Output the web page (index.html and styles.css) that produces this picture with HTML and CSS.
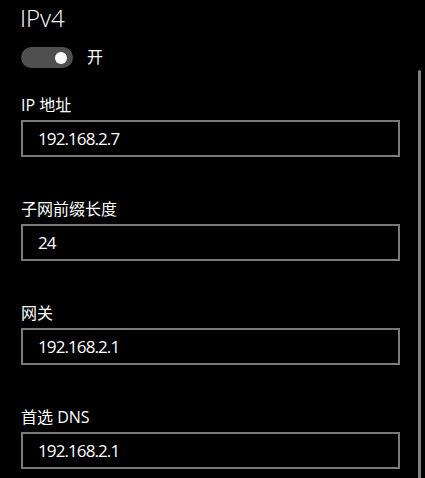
FILE: index.html
```html
<!DOCTYPE html>
<html lang="zh-CN">
<head>
<meta charset="utf-8">
<link rel="stylesheet" href="styles.css">
</head>
<body>
<div class="page">
  <main class="content">
    <h1 class="title">IPv4</h1>
    <div class="toggle-row">
      <span class="toggle"><span class="knob"></span></span>
      <span class="toggle-label">开</span>
    </div>
    <div class="field">
      <div class="label">IP 地址</div>
      <div class="textbox">192.168.2.7</div>
    </div>
    <div class="field">
      <div class="label">子网前缀长度</div>
      <div class="textbox">24</div>
    </div>
    <div class="field">
      <div class="label">网关</div>
      <div class="textbox">192.168.2.1</div>
    </div>
    <div class="field">
      <div class="label">首选 DNS</div>
      <div class="textbox">192.168.2.1</div>
    </div>
  </main>
  <div class="scrollbar"></div>
</div>
</body>
</html>
```
FILE: styles.css
```css
html, body {
  margin: 0;
  padding: 0;
  background: #000;
  color: #fff;
  font-family: "Open Sans", "Noto Sans CJK SC", sans-serif;
  overflow: hidden;
}
.page {
  display: flex;
  height: 478px;
}
.content {
  width: 379px;
  padding: 2px 0 0 21px;
}
.title {
  margin: 0 0 0 -1px;
  font-size: 24px;
  line-height: 32px;
  font-weight: 300;
}
.toggle-row {
  display: flex;
  align-items: center;
  gap: 14px;
  margin-top: 13px;
  height: 21px;
}
.toggle {
  width: 52px;
  height: 21px;
  border-radius: 11px;
  background: #4f4f4f;
  display: flex;
  align-items: center;
  justify-content: flex-end;
  padding-right: 6px;
  box-sizing: border-box;
}
.knob {
  width: 12px;
  height: 12px;
  border-radius: 50%;
  background: #fff;
}
.toggle-label {
  font-size: 16px;
  line-height: 21px;
}
.field {
  margin-top: 26px;
}
.field + .field {
  margin-top: 41px;
}
.label {
  font-size: 16px;
  line-height: 22px;
  margin-bottom: 4px;
}
.textbox {
  height: 37px;
  box-sizing: border-box;
  border: 2px solid #7a7a7a;
  padding: 0 0 0 15px;
  font-size: 17px;
  letter-spacing: -0.9px;
  line-height: 33px;
}
.scrollbar {
  margin: 70px 0 0 18px;
  width: 3px;
  height: 420px;
  background: #808080;
  border-radius: 2px 2px 0 0;
}
```
